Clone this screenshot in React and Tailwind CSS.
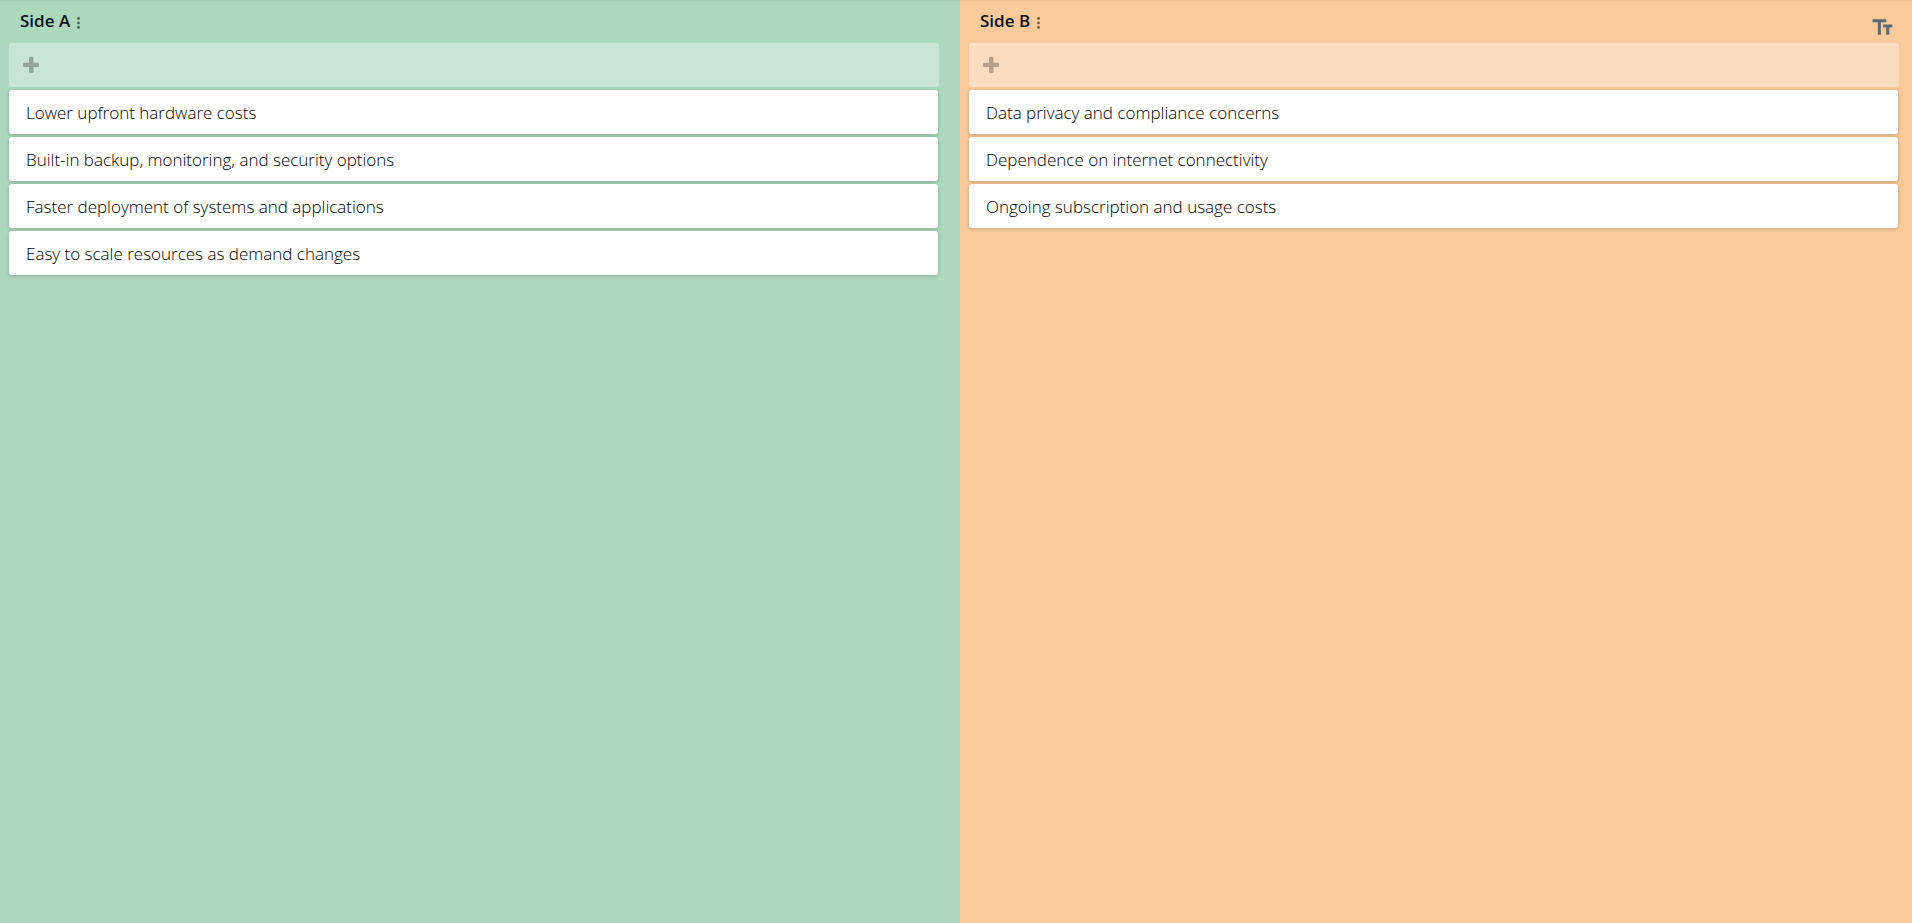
import { MdTextFields } from "react-icons/md";

const sides = [
    {
        title: "Side A",
        panel: "bg-[#acd9be] pr-[21px]",
        items: [
            "Lower upfront hardware costs",
            "Built-in backup, monitoring, and security options",
            "Faster deployment of systems and applications",
            "Easy to scale resources as demand changes",
        ],
    },
    {
        title: "Side B",
        panel: "bg-[#faca9b] pr-[13px]",
        items: [
            "Data privacy and compliance concerns",
            "Dependence on internet connectivity",
            "Ongoing subscription and usage costs",
        ],
    },
];

const PlusIcon = () => (
    <svg className="size-4" viewBox="0 0 16 16" fill="currentColor" aria-hidden="true">
        <path d="M7 0h2.5a1 1 0 0 1 1 1v4.7H15a1 1 0 0 1 1 1V9a1 1 0 0 1-1 1h-4.5v5a1 1 0 0 1-1 1H7a1 1 0 0 1-1-1v-5H1a1 1 0 0 1-1-1V6.7a1 1 0 0 1 1-1h5V1a1 1 0 0 1 1-1z" />
    </svg>
);

const DotsIcon = () => (
    <svg className="h-3 w-[3px]" viewBox="0 0 3 12" fill="currentColor" aria-hidden="true">
        <circle cx="1.5" cy="1.5" r="1.4" />
        <circle cx="1.5" cy="6" r="1.4" />
        <circle cx="1.5" cy="10.5" r="1.4" />
    </svg>
);

const Side = ({ title, panel, items, children }) => (
    <section className={`${panel} pl-[9px] shadow-[inset_0_3px_2px_-2px_rgba(0,0,0,0.08)]`}>
        <header className="flex h-[43px] items-center justify-between pl-[11px]">
            <div className="flex h-full items-center gap-[7px] pb-0.5">
                <h2 className="text-[17px] leading-6 font-semibold text-[#0a1020]">{title}</h2>
                <button type="button" aria-label={`${title} menu`} className="pt-1 text-black/55">
                    <DotsIcon />
                </button>
            </div>
            {children}
        </header>
        <button
            type="button"
            aria-label={`Add to ${title}`}
            className="flex h-11 w-full items-center rounded-[3px] bg-white/35 pl-3.5 text-black/28"
        >
            <PlusIcon />
        </button>
        <ul className="flex flex-col gap-[3px] pt-[3px] pr-px">
            {items.map((item) => (
                <li
                    key={item}
                    className="min-h-11 rounded-[3px] bg-white px-[17px] pt-[11px] pb-[9px] text-[17px] leading-6 font-light text-black shadow-[0_1px_4px_rgba(0,0,0,0.2)]"
                >
                    {item}
                </li>
            ))}
        </ul>
    </section>
);

const App = () => {
    return (
        <main className="grid min-h-screen grid-cols-[calc(50%+4px)_1fr] font-['Segoe_UI','Open_Sans',sans-serif]">
            <Side {...sides[0]} />
            <Side {...sides[1]}>
                <button type="button" aria-label="Text size" className="pt-3 pr-1 text-[#5a6b7d]">
                    <MdTextFields className="size-[25px]" />
                </button>
            </Side>
        </main>
    );
};

export default App;
